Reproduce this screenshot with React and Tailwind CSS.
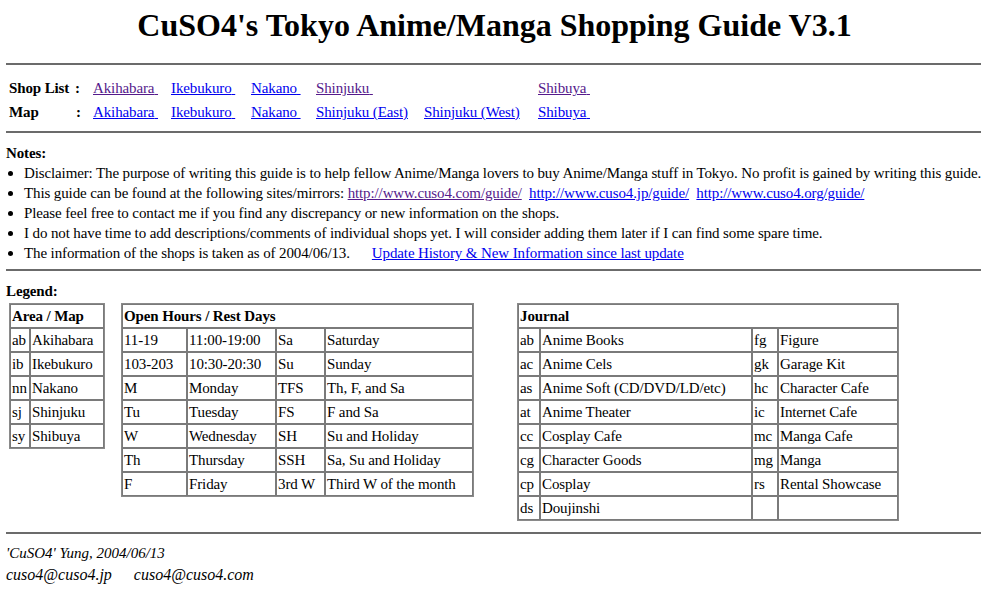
import React from "react";

const serif = { fontFamily: '"Liberation Serif", "Times New Roman", serif' };

const Hr = () => <div className="border-t-2 border-[#6b6b6b] mr-[2px]" />;

const areas = [
  ["ab", "Akihabara"],
  ["ib", "Ikebukuro"],
  ["nn", "Nakano"],
  ["sj", "Shinjuku"],
  ["sy", "Shibuya"],
];

const hours = [
  ["11-19", "11:00-19:00", "Sa", "Saturday"],
  ["103-203", "10:30-20:30", "Su", "Sunday"],
  ["M", "Monday", "TFS", "Th, F, and Sa"],
  ["Tu", "Tuesday", "FS", "F and Sa"],
  ["W", "Wednesday", "SH", "Su and Holiday"],
  ["Th", "Thursday", "SSH", "Sa, Su and Holiday"],
  ["F", "Friday", "3rd W", "Third W of the month"],
];

const journal = [
  ["ab", "Anime Books", "fg", "Figure"],
  ["ac", "Anime Cels", "gk", "Garage Kit"],
  ["as", "Anime Soft (CD/DVD/LD/etc)", "hc", "Character Cafe"],
  ["at", "Anime Theater", "ic", "Internet Cafe"],
  ["cc", "Cosplay Cafe", "mc", "Manga Cafe"],
  ["cg", "Character Goods", "mg", "Manga"],
  ["cp", "Cosplay", "rs", "Rental Showcase"],
  ["ds", "Doujinshi", "", ""],
];

const td = "border border-[#7a7a7a] px-[1px] py-[1px] leading-[20px] whitespace-nowrap align-top";
const tableCls = "border border-[#8a8a8a] border-separate border-spacing-0";

const Link = ({ visited, children }) => (
  <a href="#" className={visited ? "text-[#551a8b] underline" : "text-[#0000ee] underline"}>
    {children}
  </a>
);

const notes = [
  <>Disclaimer: The purpose of writing this guide is to help fellow Anime/Manga lovers to buy Anime/Manga stuff in Tokyo. No profit is gained by writing this guide.</>,
  <>
    This guide can be found at the following sites/mirrors: <Link visited>http://www.cuso4.com/guide/</Link>
    {"\u00a0\u00a0"}
    <Link>http://www.cuso4.jp/guide/</Link>
    {"\u00a0\u00a0"}
    <Link>http://www.cuso4.org/guide/</Link>
  </>,
  <>Please feel free to contact me if you find any discrepancy or new information on the shops.</>,
  <>I do not have time to add descriptions/comments of individual shops yet. I will consider adding them later if I can find some spare time.</>,
  <>
    The information of the shops is taken as of 2004/06/13.
    <span className="inline-block w-[22px]" />
    <Link>Update History &amp; New Information since last update</Link>
  </>,
];

export default function App() {
  return (
    <div className="bg-white text-black min-h-[603px] pl-[6px] text-[15px] tracking-[-0.12px]" style={serif}>
      <h1 className="text-center font-bold text-[32px] leading-[37px] pt-[7px] pb-[19px] tracking-normal">
        CuSO4's Tokyo Anime/Manga Shopping Guide V3.1
      </h1>
      <Hr />

      <div className="grid grid-cols-[66px_18px_78px_80px_65px_108px_114px_auto] ml-[3px] mt-[11px] mb-[7px] leading-[24px]">
        <span className="font-bold">Shop List</span>
        <span className="font-bold">:</span>
        <span><Link visited>Akihabara{"\u00a0"}</Link></span>
        <span><Link>Ikebukuro{"\u00a0"}</Link></span>
        <span><Link>Nakano{"\u00a0"}</Link></span>
        <span><Link visited>Shinjuku{"\u00a0"}</Link></span>
        <span />
        <span><Link visited>Shibuya{"\u00a0"}</Link></span>

        <span className="font-bold">Map</span>
        <span className="font-bold pl-[1px]">:</span>
        <span><Link>Akihabara{"\u00a0"}</Link></span>
        <span><Link>Ikebukuro{"\u00a0"}</Link></span>
        <span><Link>Nakano{"\u00a0"}</Link></span>
        <span><Link>Shinjuku (East)</Link></span>
        <span><Link>Shinjuku (West)</Link></span>
        <span><Link>Shibuya{"\u00a0"}</Link></span>
      </div>
      <Hr />

      <div className="leading-[20px] pt-[10px] pb-[6px]">
        <div className="font-bold">Notes:</div>
        <ul>
          {notes.map((n, i) => (
            <li key={i} className="flex whitespace-nowrap">
              <span className="w-[18px] shrink-0 flex items-center">
                <span className="block w-[5px] h-[5px] rounded-full bg-black ml-[2px]" />
              </span>
              <span>{n}</span>
            </li>
          ))}
        </ul>
      </div>
      <Hr />

      <div className="leading-[20px] pt-[10px] font-bold">Legend:</div>
      <div className="flex items-start ml-[3px] mt-[2px]">
        <table className={tableCls}>
          <tbody>
            <tr>
              <td colSpan={2} className={td + " font-bold"}>Area / Map</td>
            </tr>
            {areas.map((r) => (
              <tr key={r[0]}>
                <td className={td + " w-[20px]"}>{r[0]}</td>
                <td className={td + " w-[74px]"}>{r[1]}</td>
              </tr>
            ))}
          </tbody>
        </table>

        <table className={tableCls + " ml-[16px]"}>
          <tbody>
            <tr>
              <td colSpan={4} className={td + " font-bold"}>Open Hours / Rest Days</td>
            </tr>
            {hours.map((r) => (
              <tr key={r[0]}>
                <td className={td + " w-[65px]"}>{r[0]}</td>
                <td className={td + " w-[89px]"}>{r[1]}</td>
                <td className={td + " w-[49px]"}>{r[2]}</td>
                <td className={td + " w-[148px]"}>{r[3]}</td>
              </tr>
            ))}
          </tbody>
        </table>

        <table className={tableCls + " ml-[43px]"}>
          <tbody>
            <tr>
              <td colSpan={4} className={td + " font-bold"}>Journal</td>
            </tr>
            {journal.map((r) => (
              <tr key={r[0]}>
                <td className={td + " w-[22px]"}>{r[0]}</td>
                <td className={td + " w-[212px]"}>{r[1]}</td>
                <td className={td + " w-[26px]"}>{r[2]}</td>
                <td className={td + " w-[120px]"}>{r[3]}</td>
              </tr>
            ))}
          </tbody>
        </table>
      </div>

      <div className="mt-[11px]">
        <Hr />
      </div>
      <div className="italic leading-[21px] pt-[9px] tracking-normal">
        <div>'CuSO4' Yung, 2004/06/13</div>
        <div className="flex gap-[22px] text-[16px]">
          <span>cuso4@cuso4.jp</span>
          <span>cuso4@cuso4.com</span>
        </div>
      </div>
    </div>
  );
}
